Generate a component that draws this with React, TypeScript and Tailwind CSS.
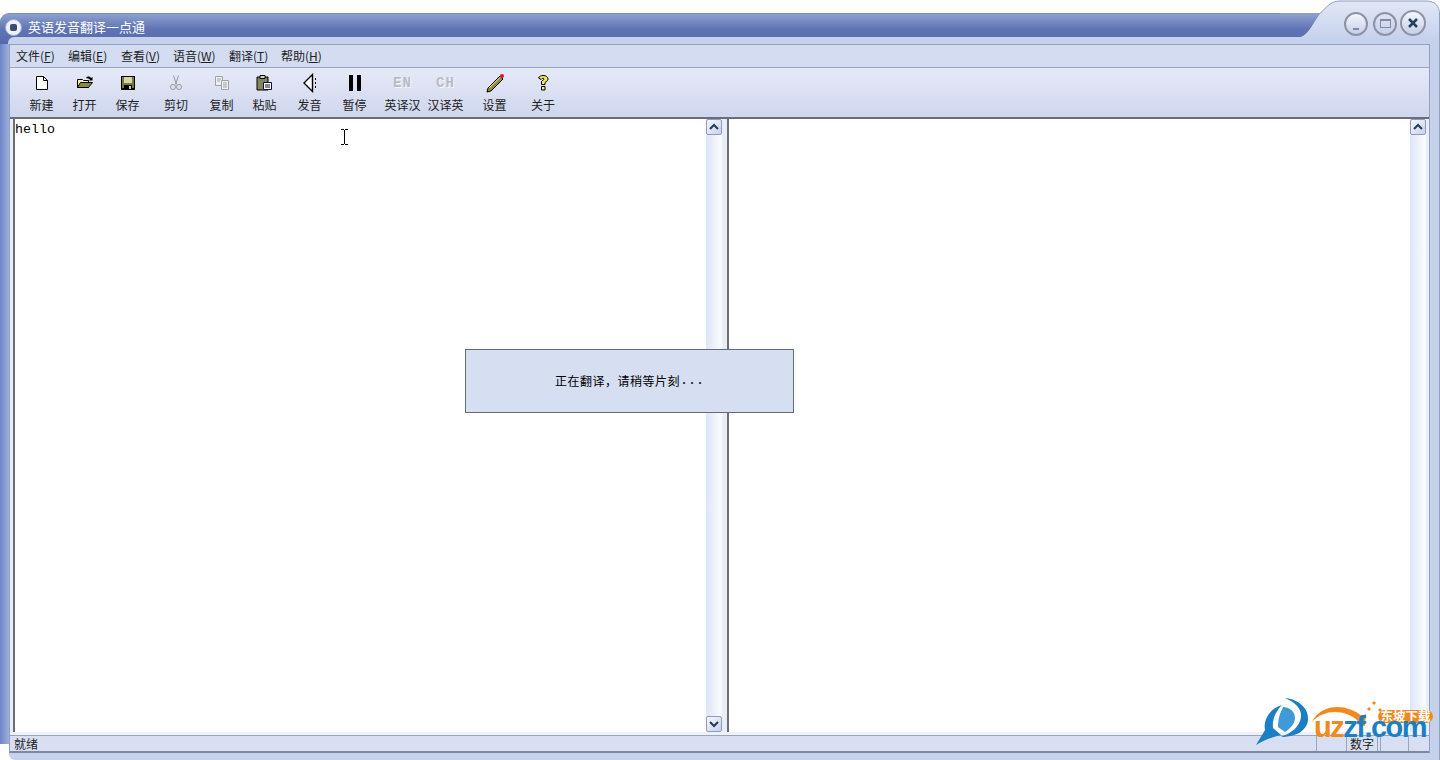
import React from 'react';

const menus = [
  { name: '文件(', key: 'F', w: 'w-[52px]' },
  { name: '编辑(', key: 'E', w: 'w-[53px]' },
  { name: '查看(', key: 'V', w: 'w-[52px]' },
  { name: '语音(', key: 'W', w: 'w-[56px]' },
  { name: '翻译(', key: 'T', w: 'w-[52px]' },
  { name: '帮助(', key: 'H', w: 'w-[52px]' },
];

const NewIcon = () => (
  <svg width="16" height="16" viewBox="0 0 16 16">
    <path d="M2.500 1.500h7l4 4v9h-11z" fill="#fff" stroke="#000" />
    <path d="M9.500 1.500v4h4" fill="none" stroke="#000" />
  </svg>
);
const OpenIcon = () => (
  <svg width="18" height="16" viewBox="0 0 18 16">
    <path d="M1.500 4.500h5l1 1h5v7h-11z" fill="#f2efa0" stroke="#000" />
    <path d="M1.500 12.500l3-5h12l-4 5z" fill="#8a8a30" stroke="#000" />
    <path d="M10 3c1-2 4-2 5 0l1.500-1v3.500H13l1-1c-1-1-2.500-1-4-1.500z" fill="#000" />
  </svg>
);
const SaveIcon = () => (
  <svg width="16" height="16" viewBox="0 0 16 16">
    <path d="M1 1h14v14H1z" fill="#000" />
    <path d="M2 2h12v11H2z" fill="#77773f" />
    <path d="M4 2h8v6H4z" fill="#d6d6a8" />
    <path d="M4 10h8v5H4z" fill="#000" />
    <path d="M9 11h2v3H9z" fill="#c9c9c9" />
  </svg>
);
const CutIcon = () => (
  <svg width="16" height="18" viewBox="0 0 16 18" fill="none" stroke="#9a9a9a">
    <path d="M5.500 1.500l3 9M10.500 1.500l-3 9" />
    <circle cx="5" cy="13" r="2.500" />
    <circle cx="11" cy="13" r="2.500" />
  </svg>
);
const CopyIcon = () => (
  <svg width="16" height="16" viewBox="0 0 16 16" fill="#eef0f8" stroke="#a2a2a2">
    <path d="M1.500 1.500h7v9h-7z" />
    <path d="M7.500 5.500h7v9h-7z" />
    <path d="M3 4h4M3 6h3M9 8h4M9 10h4M9 12h4" fill="none" />
  </svg>
);
const PasteIcon = () => (
  <svg width="17" height="17" viewBox="0 0 17 17">
    <path d="M1 3h11v13H1z" fill="#85855a" stroke="#000" />
    <path d="M4 1.500h5v3H4z" fill="#d8d8c0" stroke="#000" />
    <path d="M7.500 8.500h8v7h-8z" fill="#fff" stroke="#10104a" />
    <path d="M9 11h5M9 13h5" stroke="#10104a" />
  </svg>
);
const SpeakIcon = () => (
  <svg width="16" height="20" viewBox="0 0 16 20" fill="none" stroke="#000">
    <path d="M10.500 1.500L2 10l8.500 8.500z" fill="#fff" strokeWidth="1.400" />
    <path d="M13.500 5v2M13.500 9v2M13.500 13v2" />
  </svg>
);
const PauseIcon = () => (
  <svg width="14" height="16" viewBox="0 0 14 16">
    <path d="M1 0h4v16H1zM9 0h4v16H9z" fill="#000" />
  </svg>
);
const PenIcon = () => (
  <svg width="20" height="20" viewBox="0 0 20 20">
    <path d="M15 3L3 15l-1 4 4-1L18 6z" fill="#8c8c40" stroke="#000" />
    <path d="M4 15L15.500 4" stroke="#e9e6b0" />
    <circle cx="17" cy="3" r="2" fill="#e01515" />
  </svg>
);
const HelpIcon = () => (
  <svg width="14" height="18" viewBox="0 0 14 18">
    <path d="M7 1.500c3 0 5 1.500 5 3.500 0 2-2 2.500-3 3.500v2H5.500V7.500C6 6.500 8 6 8 5c0-1-2-1-3 .5L2.500 4C3 2.500 5 1.500 7 1.500z" fill="#f4ea5c" stroke="#000" />
    <path d="M5.500 12.500H9v3.500H5.500z" fill="#f4ea5c" stroke="#000" />
  </svg>
);

const GrayLabel = ({ text }: { text: string }) => (
  <span className="text-[14px] leading-[16px] font-bold tracking-[1px] text-[#b9bcc4] [text-shadow:1px_1px_0_#f4f6fc] [font-family:'Liberation_Mono',monospace]">{text}</span>
);

const tools: { label: string; icon: React.ReactNode; w: string }[] = [
  { label: '新建', icon: <NewIcon />, w: 'w-[43px]' },
  { label: '打开', icon: <OpenIcon />, w: 'w-[43px]' },
  { label: '保存', icon: <SaveIcon />, w: 'w-[43px]' },
  { label: '剪切', icon: <CutIcon />, w: 'w-[48px] ml-[3px]' },
  { label: '复制', icon: <CopyIcon />, w: 'w-[43px]' },
  { label: '粘贴', icon: <PasteIcon />, w: 'w-[43px]' },
  { label: '发音', icon: <SpeakIcon />, w: 'w-[47px]' },
  { label: '暂停', icon: <PauseIcon />, w: 'w-[43px]' },
  { label: '英译汉', icon: <GrayLabel text="EN" />, w: 'w-[43px] ml-[5px]' },
  { label: '汉译英', icon: <GrayLabel text="CH" />, w: 'w-[43px]' },
  { label: '设置', icon: <PenIcon />, w: 'w-[49px] ml-[3px]' },
  { label: '关于', icon: <HelpIcon />, w: 'w-[48px]' },
];

const ScrollButton = ({ down }: { down?: boolean }) => (
  <div className="w-[16px] h-[16px] border border-[#8c9cc0] rounded-[2px] bg-gradient-to-br from-[#f7f8fd] to-[#c9d2ea] flex items-center justify-center">
    <svg width="10" height="8" viewBox="0 0 10 8" className={down ? 'rotate-180' : ''}>
      <path d="M1 6l4-4 4 4" fill="none" stroke="#1f3c5c" strokeWidth="2" />
    </svg>
  </div>
);

const Pane = ({ className, showDown, children }: { className: string; showDown?: boolean; children?: React.ReactNode }) => (
  <div className={`flex bg-white ${className}`}>
    <div className="flex-1 pt-[2px] text-[13.33px] leading-[18px] text-black [font-family:'Liberation_Mono',monospace]">{children}</div>
    <div className="w-[16px] flex flex-col justify-between bg-gradient-to-r from-[#dfe5f8] to-[#fbfcff]">
      <ScrollButton />
      {showDown && <ScrollButton down />}
    </div>
  </div>
);

const Logo = () => (
  <div className="absolute left-[1256px] top-[696px] w-[180px] h-[50px]">
    <svg width="180" height="50" viewBox="0 0 180 50" className="absolute left-0 top-0">
      {/* left crescent and arrow */}
      <path d="M0 49l9-15C7 24 14 12 26 9c-6 6-10 14-9 23l8 7C16 41 8 44 0 49z" fill="#1a7fc5" />
      <path d="M29 2c13 1 24 10 23 22-1 11-13 17-27 17 11-4 19-11 20-20C46 13 39 6 29 2z" fill="#1a7fc5" />
      <path d="M27 11c6 0 12 4 12 11 0 5-4 10-10 14l-7-5c0-8 2-15 5-20z" fill="#3f9bd8" />
      <path d="M20 31c0-7 2-13 6-19" fill="none" stroke="#fff" strokeWidth="1.500" />
      {/* orange arc */}
      <path d="M56 26C64 8 90 6 107 21l3-4-1 13-12-3 5-2C89 13 68 13 56 26z" fill="#f08a1e" />
      <path d="M111 13l2 2 2-2-2-2zM122 14l2 2 2-2-2-2zM116 7l2 2 2-2-2-2z" fill="#f08a1e" />
      <rect x="122" y="14" width="55" height="13" rx="6.500" fill="#f08a1e" />
    </svg>
    <span className="absolute left-[123px] top-[15px] w-[53px] text-center text-[12.500px] leading-[10px] font-bold text-white [font-family:'Noto_Sans_CJK_SC',sans-serif]">东坡下载</span>
    <span className="absolute left-[58px] top-[24px] text-[29px] leading-[14px] font-bold tracking-[-1.500px] whitespace-nowrap [font-family:'Liberation_Sans',sans-serif]">
      <span className="text-[#ef8a1d]">uz</span>
      <span className="text-[#1a7fc5]">zf.com</span>
    </span>
  </div>
);

export default function App() {
  return (
    <div className="relative w-[1440px] h-[760px] overflow-hidden bg-white flex flex-col text-[12px] text-[#222] [font-family:'Noto_Sans_CJK_SC','Liberation_Sans',sans-serif]">
      {/* Title bar */}
      <div className="h-[44px] flex shrink-0 relative">
        <div className="flex-1 mt-[13px] rounded-tl-[9px] border-t border-[#7d8fb5] bg-gradient-to-b from-[#8ea0cf] via-[#5f74b4] to-[#5568ad] flex items-start">
          <div className="mt-[5px] ml-[5px] w-[17px] h-[17px] rounded-full bg-[#eef1f9] border border-[#9aa8cc] flex items-center justify-center">
            <div className="w-[7px] h-[7px] rounded-[2px] bg-[#3a4a78]" />
          </div>
          <span className="ml-[6px] mt-[4px] text-[13px] leading-[18px] text-white">英语发音翻译一点通</span>
        </div>
        {/* Skin curve on the right of the title */}
        <svg width="160" height="44" viewBox="0 0 160 44" className="absolute right-0 top-0">
          <defs>
            <linearGradient id="bar" gradientUnits="userSpaceOnUse" x1="0" y1="14" x2="0" y2="44">
              <stop offset="0" stopColor="#8ea0cf" />
              <stop offset="0.5" stopColor="#5f74b4" />
              <stop offset="1" stopColor="#5568ad" />
            </linearGradient>
            <linearGradient id="skin" gradientUnits="userSpaceOnUse" x1="0" y1="0" x2="0" y2="44">
              <stop offset="0" stopColor="#e2e8f6" />
              <stop offset="1" stopColor="#c3cfea" />
            </linearGradient>
          </defs>
          <path d="M0 38H15C28 38 32 24 40 13 46 8 50 1 60 1H146C155 1 159 6 159 14V44H0z" fill="url(#skin)" />
          <path d="M0 14H40C32 24 28 37 15 37H0z" fill="url(#bar)" />
          <path d="M0 13.500H40C46 8 50 1 60 1H146C155 1 159.500 6 159.500 14V44" fill="none" stroke="#8f9fbf" />
        </svg>
        <div className="absolute left-[8px] right-0 top-[37px] h-[7px] bg-[#c6d2ec] rounded-tl-[6px] border-r border-[#8f9fbf]" />
        {/* Window buttons */}
        <div className="absolute left-[1344px] top-[11px] flex items-center">
          <div className="w-[24px] h-[24px] rounded-full border-2 border-[#8d93a4] bg-gradient-to-b from-[#f4f6fb] to-[#c5d0e8] flex items-end justify-center pb-[4px]">
            <div className="w-[6px] h-[2px] bg-[#7d8ba8]" />
          </div>
          <div className="ml-[5px] w-[24px] h-[24px] rounded-full border-2 border-[#8d93a4] bg-gradient-to-b from-[#dde3f2] to-[#c5d0e8] flex items-center justify-center">
            <div className="w-[11px] h-[9px] border border-[#7d8ba8] border-t-2" />
          </div>
          <div className="ml-[3px] w-[26px] h-[26px] -mt-[1px] rounded-full border-2 border-[#8d93a4] bg-gradient-to-b from-[#f4f6fb] to-[#c5d0e8] flex items-center justify-center">
            <svg width="12" height="12" viewBox="0 0 12 12">
              <path d="M2 2l8 8M10 2l-8 8" stroke="#24405f" strokeWidth="2.500" />
            </svg>
          </div>
        </div>
      </div>

      <div className="flex-1 flex min-h-0">
        {/* Left edge of the frame */}
        <div className="w-[9px] h-[700px] bg-gradient-to-r from-[#6d84c4] to-[#9fb0dc]" />
        <div className="flex-1 flex flex-col bg-[#c6d2ec] pb-[7px] rounded-bl-[6px] border-r border-[#8f9fbf]">
          <div className="mr-[9px] flex-1 flex flex-col border-l border-r border-[#8f9fbf]">
            {/* Menu bar */}
            <div className="h-[23px] bg-[#d3dcf1] flex items-center border-t border-[#8f9fbf] pl-[6px] text-[12px] leading-[16px] text-[#222]">
              {menus.map(m => (
                <span key={m.key + m.name} className={`${m.w} whitespace-nowrap`}>
                  {m.name}<span className="underline">{m.key}</span>)
                </span>
              ))}
            </div>
            {/* Toolbar */}
            <div className="h-[52px] border-t border-[#9aa6bf] border-b-2 border-b-[#6b6e75] bg-gradient-to-b from-[#e6e9f7] to-[#cfd7ee] flex pl-[10px]">
              {tools.map(t => (
                <div key={t.label} className={`${t.w} h-full flex flex-col items-center shrink-0`}>
                  <div className="h-[29px] flex items-center justify-center">{t.icon}</div>
                  <span className="text-[12px] leading-[16px] text-[#222] whitespace-nowrap">{t.label}</span>
                </div>
              ))}
            </div>
            {/* Text panes */}
            <div className="flex-1 flex items-stretch min-h-0 pl-[3px] bg-[#e9edf8]">
              <Pane className="w-[709px] border-l-2 border-[#6b6e75]" showDown>hello</Pane>
              <div className="w-[5px]" />
              <Pane className="w-[699px] border-l-2 border-[#6b6e75] mr-[2px]" />
            </div>
            {/* Status bar */}
            <div className="h-[3px] bg-[#eef1fa]" />
            <div className="h-[18px] flex border-t border-[#9aa6bf] border-b-2 border-b-[#7d88a3] bg-[#d9dff2] pl-[4px] text-[12px] leading-[15px]">
              <span className="flex-1">就绪</span>
              <div className="w-[2px]" />
              <div className="w-[31px] border-x border-[#9aa6bf]" />
              <div className="w-[31px] border-r border-[#9aa6bf] text-center">数字</div>
              <div className="ml-[2px] w-[29px] border-x border-[#9aa6bf]" />
              <div className="w-[20px]" />
            </div>
          </div>
        </div>
      </div>

      {/* Progress popup */}
      <div className="absolute left-[465px] top-[349px] w-[329px] h-[64px] border border-[#666b75] bg-[#d6def2] flex items-center justify-center text-[12px] tracking-[0.500px] text-black">
        正在翻译，请稍等片刻<span className="text-[13.33px] tracking-normal [font-family:'Liberation_Mono',monospace]">...</span>
      </div>

      {/* I-beam mouse pointer */}
      <svg width="9" height="16" viewBox="0 0 9 16" className="absolute left-[340px] top-[129px]">
        <path d="M1 .5h3M5 .5h3M4.500 1v14M1 15.500h3M5 15.500h3" stroke="#000" fill="none" />
      </svg>

      <Logo />
    </div>
  );
}
